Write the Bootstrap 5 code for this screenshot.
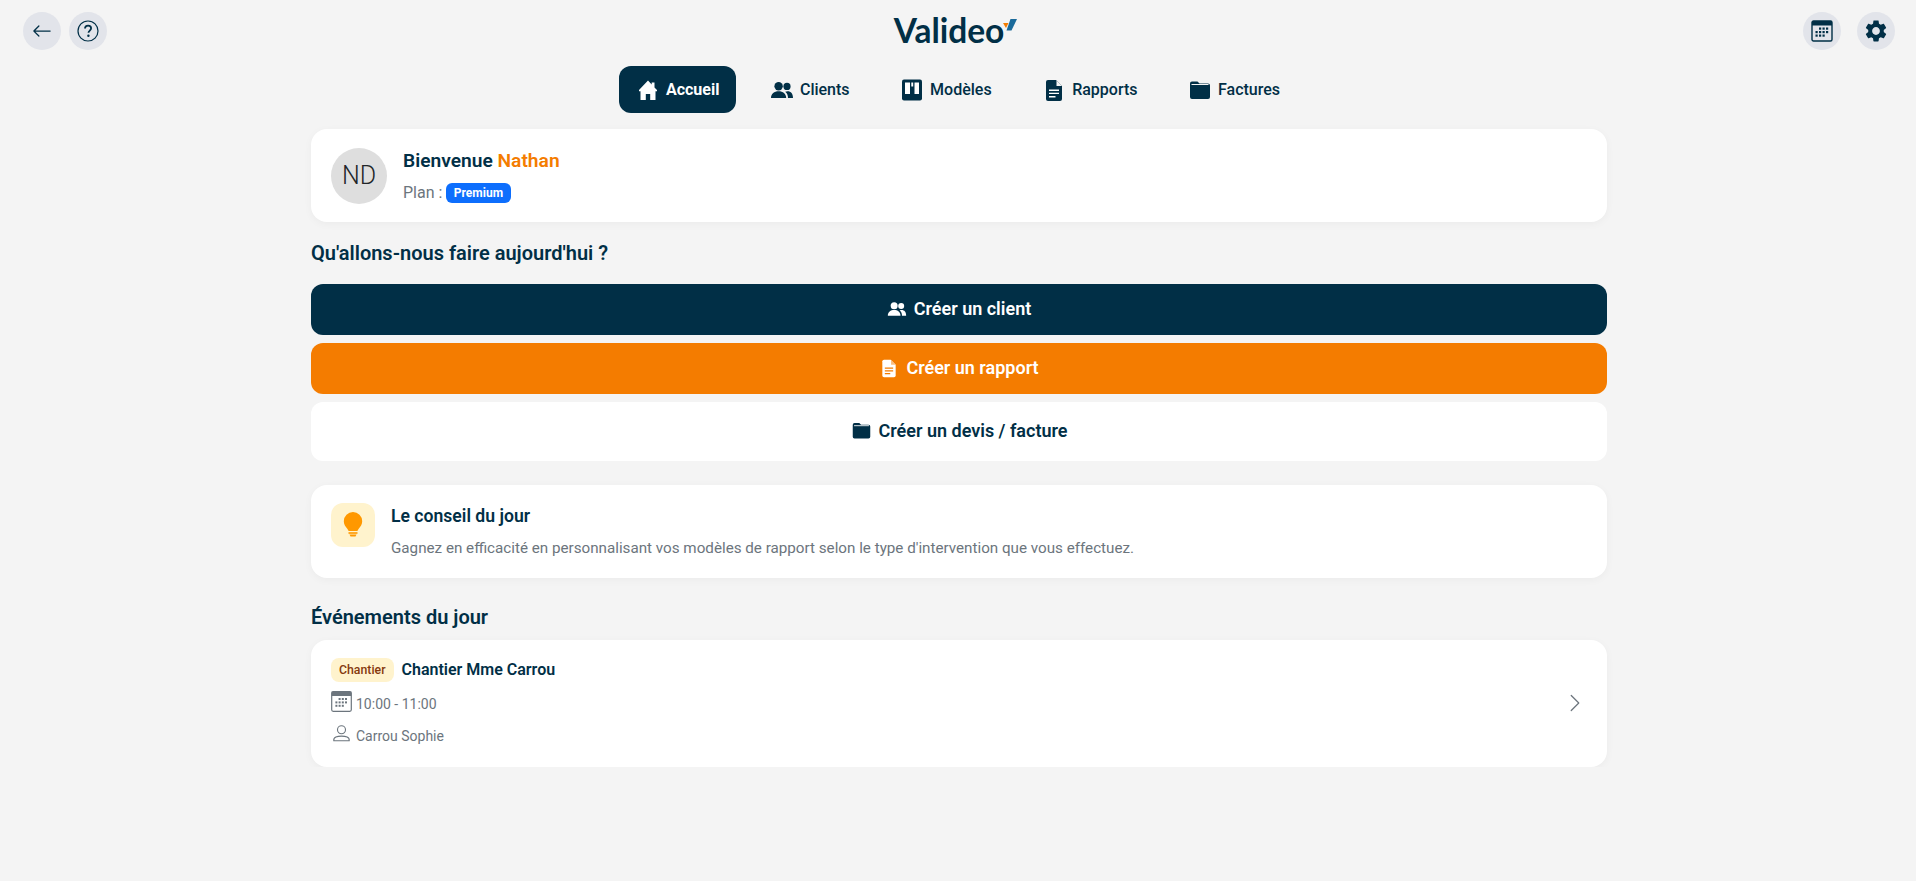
<!DOCTYPE html>
<html lang="fr">
<head>
    <meta charset="UTF-8">
    <title>Valideo</title>
    <link href="https://cdn.jsdelivr.net/npm/bootstrap@5.3.0/dist/css/bootstrap.min.css" rel="stylesheet">
    <style>
        body { background: #f4f4f4; color: #012f46; font-family: Roboto, "Liberation Sans", sans-serif; }
        .top-bar { height: 50px; padding: 12px 21px 0 23px; }
        .top-side { flex: 1 1 0; gap: 8px; }
        .top-side-end { gap: 16px; }
        .round-btn { width: 38px; height: 38px; background: #e2e4ea; }
        .logo-wrap { height: 38px; margin-top: -1px; padding-right: 7px; }
        .logo-text { font-family: Lato, sans-serif; font-weight: 700; font-size: 33.5px; line-height: 38px; color: #012f46; }
        .logo-mark { margin-left: -1px; }
        .main-nav { margin-top: 16px; gap: 16.5px; }
        .nav-pill { height: 47px; padding: 0 17px; gap: 6px; border-radius: 12px; font-size: 16px; font-weight: 500; color: #012f46; text-decoration: none; }
        .nav-pill.is-active { background: #012f46; color: #fff; font-weight: 700; }
        .nav-ico { width: 24px; }
        .page-wrap { width: 1296px; margin: 16px auto 0; transform: translateX(1px); }
        .panel { border: 0; border-radius: 16px; background: #fff; box-shadow: 0 2px 8px rgba(0,0,0,.04); }
        .hello-panel { height: 93px; padding: 19px 20px; gap: 16px; }
        .avatar { width: 56px; height: 56px; background: #dedede; color: #212529; font-size: 25px; font-weight: 300; }
        .hello-name { font-size: 19.2px; font-weight: 600; line-height: 20px; margin-top: 3px; }
        .brand-orange { color: #f47c00; }
        .plan-line { font-size: 16px; line-height: 20px; color: #6c757d; margin-top: 12px; }
        .plan-badge { font-size: 12px; font-weight: 700; padding: 4px 7.5px; line-height: 12px; background: #0d6efd; border-radius: 6px; vertical-align: 1px; }
        .block-title { font-size: 20px; font-weight: 600; line-height: 22px; }
        .title-what { margin: 20px 0; }
        .title-events { margin: 28px 0 12px; }
        .action-btn { height: 51px; width: 100%; border: 0; border-radius: 12px; font-size: 18px; font-weight: 600; gap: 7px; padding-bottom: 8px; }
        .action-btn + .action-btn { margin-top: 8px; }
        .action-dark { background: #012f46; color: #fff; }
        .action-orange { background: #f47c00; color: #fff; }
        .action-light { background: #fff; color: #012f46; height: 59px; }
        .tip-panel { height: 93px; padding: 18px 20px; gap: 16px; margin-top: 24px; }
        .tip-ico { width: 44px; height: 44px; background: #fff3cd; border-radius: 12px; padding-bottom: 2px; }
        .tip-title { font-size: 17.6px; font-weight: 600; line-height: 22px; margin-top: 2px; }
        .tip-text { font-size: 15.2px; line-height: 20px; color: #6c757d; margin-top: 11px; }
        .event-panel { height: 127px; padding: 18px 20px; }
        .event-tag { height: 24px; padding: 0 8px; background: #fff3cd; color: #85390d; font-size: 12.3px; font-weight: 500; border-radius: 8px; }
        .event-name { font-size: 16px; font-weight: 600; }
        .event-line { font-size: 14px; color: #6c757d; line-height: 20px; gap: 4px; }
        .event-line-time { margin-top: 9px; height: 23px; }
        .event-line-client { margin-top: 11px; height: 21px; }
        .event-chevron { margin: 0 2px 2px 0; }
    </style>
</head>
<body>
    <div class="top-bar d-flex align-items-start">
        <div class="top-side d-flex">
            <a class="round-btn rounded-circle d-flex align-items-center justify-content-center" href="#">
                <svg width="20" height="20" viewBox="0 0 16 16" fill="#012f46"><path d="M15 8a.5.5 0 0 0-.5-.5H2.707l3.147-3.146a.5.5 0 1 0-.708-.708l-4 4a.5.5 0 0 0 0 .708l4 4a.5.5 0 0 0 .708-.708L2.707 8.5H14.5A.5.5 0 0 0 15 8z"/></svg>
            </a>
            <a class="round-btn rounded-circle d-flex align-items-center justify-content-center" href="#">
                <svg width="22" height="22" viewBox="0 0 22 22"><circle cx="11" cy="11" r="10" fill="none" stroke="#012f46" stroke-width="1.2"/><path d="M8 8.6c0-1.8 1.3-2.9 3.1-2.9 1.7 0 3 1 3 2.6 0 2.2-2.6 2.3-2.6 4.4" fill="none" stroke="#012f46" stroke-width="1.8"/><circle cx="11.4" cy="15.8" r="1.2" fill="#012f46"/></svg>
            </a>
        </div>
        <div class="logo-wrap d-flex align-items-start">
            <span class="logo-text">Valideo</span>
            <svg width="14" height="15" viewBox="0 0 14 15" class="logo-mark mt-2"><path d="M0 4h5.5L3 9z" fill="#f47c00"/><path d="M7.5 0H14L8.5 11.5H3.5z" fill="#1a6a9a"/></svg>
        </div>
        <div class="top-side top-side-end d-flex justify-content-end">
            <a class="round-btn rounded-circle d-flex align-items-center justify-content-center" href="#">
                <svg width="22" height="22" viewBox="0 0 22 22"><rect x="1" y="1" width="20" height="20" rx="1.5" fill="none" stroke="#012f46" stroke-width="1.4"/><rect x="1" y="1" width="20" height="4.5" fill="#012f46"/><g fill="#012f46"><rect x="8" y="7.5" width="2.2" height="2.2"/><rect x="11.5" y="7.5" width="2.2" height="2.2"/><rect x="15" y="7.5" width="2.2" height="2.2"/><rect x="4.5" y="11" width="2.2" height="2.2"/><rect x="8" y="11" width="2.2" height="2.2"/><rect x="11.5" y="11" width="2.2" height="2.2"/><rect x="15" y="11" width="2.2" height="2.2"/><rect x="4.5" y="14.5" width="2.2" height="2.2"/><rect x="8" y="14.5" width="2.2" height="2.2"/><rect x="11.5" y="14.5" width="2.2" height="2.2"/></g></svg>
            </a>
            <a class="round-btn rounded-circle d-flex align-items-center justify-content-center" href="#">
                <svg width="26" height="26" viewBox="0 0 24 24" fill="#012f46"><path d="M19.14 12.94c.04-.3.06-.61.06-.94 0-.32-.02-.64-.07-.94l2.03-1.58c.18-.14.23-.41.12-.61l-1.92-3.32c-.12-.22-.37-.29-.59-.22l-2.39.96c-.5-.38-1.03-.7-1.62-.94l-.36-2.54c-.04-.24-.24-.41-.48-.41h-3.84c-.24 0-.43.17-.47.41l-.36 2.54c-.59.24-1.13.57-1.62.94l-2.39-.96c-.22-.08-.47 0-.59.22L2.74 8.87c-.12.21-.08.47.12.61l2.03 1.58c-.05.3-.09.63-.09.94s.02.64.07.94l-2.03 1.58c-.18.14-.23.41-.12.61l1.92 3.32c.12.22.37.29.59.22l2.39-.96c.5.38 1.03.7 1.62.94l.36 2.54c.05.24.24.41.48.41h3.84c.24 0 .44-.17.47-.41l.36-2.54c.59-.24 1.13-.56 1.62-.94l2.39.96c.22.08.47 0 .59-.22l1.92-3.32c.12-.22.07-.47-.12-.61l-2.01-1.58zM12 15.6c-1.98 0-3.6-1.62-3.6-3.6s1.62-3.6 3.6-3.6 3.6 1.62 3.6 3.6-1.62 3.6-3.6 3.6z"/></svg>
            </a>
        </div>
    </div>

    <nav class="main-nav d-flex justify-content-center">
        <a class="nav-pill is-active d-flex align-items-center" href="#">
            <svg class="nav-ico" width="24" height="24" viewBox="0 0 24 24" fill="#fff"><path d="M12 2.5 3 12v1.2h1.5V22h5.3v-6h4.4v6h5.3v-8.8H21V12l-2.5-2.6V4.5h-2.8v2.1z"/></svg>
            Accueil
        </a>
        <a class="nav-pill d-flex align-items-center" href="#">
            <svg class="nav-ico" width="24" height="24" viewBox="0 0 24 24" fill="#012f46"><circle cx="8.6" cy="8.2" r="4.2"/><circle cx="17" cy="8.4" r="3.6"/><path d="M1 20c0-4.4 3.3-6.8 7.6-6.8s7.6 2.4 7.6 6.8zM18 20c0-2.5-.8-4.8-2.8-6.3.8-.3 1.5-.5 2.3-.5 3.5 0 5.5 2.600 5.5 6.8z"/></svg>
            Clients
        </a>
        <a class="nav-pill d-flex align-items-center" href="#">
            <svg class="nav-ico" width="24" height="24" viewBox="0 0 24 24"><rect x="2" y="1.5" width="20" height="21" rx="2" fill="#012f46"/><path d="M5 4.5h5V16H5zM11.3 4.5h1.900v4h-1.900zM14.5 4.5H19V16h-4.500z" fill="#fff"/></svg>
            Modèles
        </a>
        <a class="nav-pill d-flex align-items-center" href="#">
            <svg class="nav-ico" width="24" height="24" viewBox="0 0 24 24"><path d="M6 2h8l6 6v13a2 2 0 0 1-2 2H6a2 2 0 0 1-2-2V4a2 2 0 0 1 2-2z" fill="#012f46"/><path d="M14.5 2.5V8H20z" fill="#f4f4f4"/><path d="M7 11.5h10v1.4H7zM7 14.7h10v1.4H7zM7 18h6.5v1.4H7z" fill="#fff"/></svg>
            Rapports
        </a>
        <a class="nav-pill d-flex align-items-center" href="#">
            <svg class="nav-ico" width="24" height="24" viewBox="0 0 24 24"><path d="M2 5.5a2 2 0 0 1 2-2h5.500l2 2H20a2 2 0 0 1 2 2V19a2 2 0 0 1-2 2H4a2 2 0 0 1-2-2z" fill="#012f46"/><path d="M3.5 6.500h17" stroke="#f4f4f4" stroke-width="1"/></svg>
            Factures
        </a>
    </nav>

    <main class="page-wrap">
        <div class="panel hello-panel d-flex">
            <div class="avatar rounded-circle d-flex align-items-center justify-content-center flex-shrink-0">ND</div>
            <div>
                <div class="hello-name">Bienvenue <span class="brand-orange">Nathan</span></div>
                <div class="plan-line">Plan : <span class="badge plan-badge">Premium</span></div>
            </div>
        </div>

        <div class="block-title title-what">Qu'allons-nous faire aujourd'hui ?</div>

        <button class="btn action-btn action-dark d-flex align-items-center justify-content-center">
            <svg width="20" height="20" viewBox="0 0 24 24" fill="#fff"><circle cx="8.6" cy="8.2" r="4.2"/><circle cx="17" cy="8.4" r="3.6"/><path d="M1 20c0-4.4 3.3-6.8 7.6-6.8s7.6 2.4 7.6 6.8zM18 20c0-2.5-.8-4.8-2.8-6.3.8-.3 1.5-.5 2.3-.5 3.5 0 5.5 2.6 5.5 6.8z"/></svg>
            Créer un client
        </button>
        <button class="btn action-btn action-orange d-flex align-items-center justify-content-center">
            <svg width="20" height="20" viewBox="0 0 24 24"><path d="M6 2h8l6 6v13a2 2 0 0 1-2 2H6a2 2 0 0 1-2-2V4a2 2 0 0 1 2-2z" fill="#fff"/><path d="M14.5 2.5V8H20z" fill="#f9bd80"/><path d="M7 11.5h10v1.4H7zM7 14.7h10v1.4H7zM7 18h6.5v1.4H7z" fill="#f47c00"/></svg>
            Créer un rapport
        </button>
        <button class="btn action-btn action-light d-flex align-items-center justify-content-center">
            <svg width="21" height="21" viewBox="0 0 24 24"><path d="M2 5.5a2 2 0 0 1 2-2h5.500l2 2H20a2 2 0 0 1 2 2V19a2 2 0 0 1-2 2H4a2 2 0 0 1-2-2z" fill="#012f46"/><path d="M3.5 6.5h17" stroke="#fff" stroke-width="1"/></svg>
            Créer un devis / facture
        </button>

        <div class="panel tip-panel d-flex">
            <div class="tip-ico d-flex align-items-center justify-content-center flex-shrink-0">
                <svg width="24" height="26" viewBox="0 0 24 26" fill="#ff9800"><path d="M12 1a9.2 9.2 0 0 0-9.200 9.200c0 3.400 1.800 5.400 3.300 7.200.8 1 1.300 1.800 1.500 2.600h8.800c.2-.8.7-1.600 1.500-2.600 1.500-1.800 3.300-3.800 3.300-7.200A9.200 9.200 0 0 0 12 1z"/><rect x="7.5" y="21.2" width="9" height="1.6"/><path d="M8.5 23.6h7l-1 1.800h-5z"/></svg>
            </div>
            <div>
                <div class="tip-title">Le conseil du jour</div>
                <div class="tip-text">Gagnez en efficacité en personnalisant vos modèles de rapport selon le type d'intervention que vous effectuez.</div>
            </div>
        </div>

        <div class="block-title title-events">Événements du jour</div>

        <div class="panel event-panel d-flex justify-content-between align-items-start">
            <div>
                <div class="d-flex align-items-center gap-2">
                    <span class="event-tag d-inline-flex align-items-center">Chantier</span>
                    <span class="event-name">Chantier Mme Carrou</span>
                </div>
                <div class="event-line event-line-time d-flex align-items-end">
                    <svg class="align-self-start" width="21" height="21" viewBox="0 0 21 21"><rect x=".7" y=".7" width="19.6" height="19.6" rx="1.5" fill="none" stroke="#6c757d" stroke-width="1.2"/><rect x=".7" y=".7" width="19.6" height="4.3" fill="#6c757d"/><g fill="#6c757d"><rect x="7.6" y="7" width="2" height="2"/><rect x="10.8" y="7" width="2" height="2"/><rect x="14" y="7" width="2" height="2"/><rect x="4.4" y="10.4" width="2" height="2"/><rect x="7.6" y="10.4" width="2" height="2"/><rect x="10.8" y="10.4" width="2" height="2"/><rect x="14" y="10.4" width="2" height="2"/><rect x="4.4" y="13.8" width="2" height="2"/><rect x="7.6" y="13.8" width="2" height="2"/><rect x="10.8" y="13.8" width="2" height="2"/></g></svg>
                    10:00 - 11:00
                </div>
                <div class="event-line event-line-client d-flex align-items-end">
                    <svg class="align-self-start" width="21" height="17" viewBox="0 0 21 17" fill="none" stroke="#6c757d" stroke-width="1.1"><circle cx="10.5" cy="4.7" r="4"/><path d="M2.8 15.8c-.6-3.6 3.500-4.700 7.700-4.700s8.300 1.100 7.700 4.700z"/></svg>
                    Carrou Sophie
                </div>
            </div>
            <svg class="event-chevron align-self-center" width="20" height="20" viewBox="0 0 16 16" fill="#6c757d"><path d="M4.646 1.646a.5.5 0 0 1 .708 0l6 6a.5.5 0 0 1 0 .708l-6 6a.5.5 0 0 1-.708-.708L10.293 8 4.646 2.354a.5.5 0 0 1 0-.708z"/></svg>
        </div>
    </main>

    <script src="https://cdn.jsdelivr.net/npm/bootstrap@5.3.0/dist/js/bootstrap.bundle.min.js"></script>
</body>
</html>
